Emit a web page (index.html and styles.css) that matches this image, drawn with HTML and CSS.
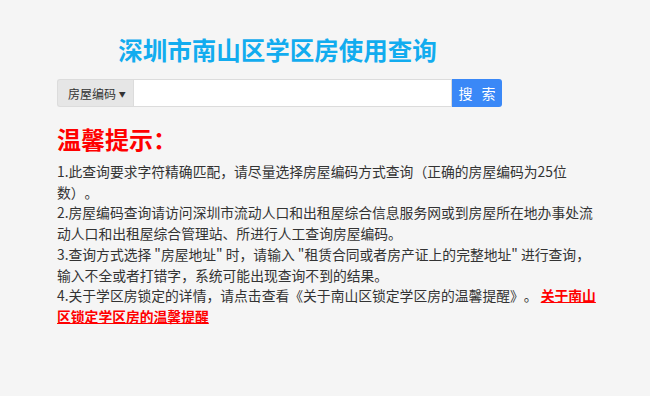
FILE: index.html
```html
<!DOCTYPE html>
<html lang="zh-CN">
<head>
  <meta charset="UTF-8" />
  <meta name="viewport" content="width=device-width, initial-scale=1" />
  <title>深圳市南山区学区房使用查询</title>
  <link rel="stylesheet" href="styles.css">
</head>
<body>
  <div class="wrap">
    <div class="search-box">
      <h1>深圳市南山区学区房使用查询</h1>
      <form class="input-group" id="searchForm">
        <button type="button" class="drop-btn">房屋编码 <span class="caret">▼</span></button>
        <input type="text" class="search-input" name="keyword" />
        <button type="submit" class="search-btn">搜 索</button>
      </form>
    </div>

    <div class="tips">
      <h2>温馨提示：</h2>
      <p>1.此查询要求字符精确匹配，请尽量选择房屋编码方式查询（正确的房屋编码为25位数）。</p>
      <p>2.房屋编码查询请访问深圳市流动人口和出租屋综合信息服务网或到房屋所在地办事处流动人口和出租屋综合管理站、所进行人工查询房屋编码。</p>
      <p>3.查询方式选择 "房屋地址" 时，请输入 "租赁合同或者房产证上的完整地址" 进行查询，输入不全或者打错字，系统可能出现查询不到的结果。</p>
      <p>4.关于学区房锁定的详情，请点击查看《关于南山区锁定学区房的温馨提醒》。 <a href="#" class="notice-link">关于南山区锁定学区房的温馨提醒</a></p>
    </div>
  </div>
</body>
</html>
```

FILE: styles.css
```css
body {
  margin: 0;
  background: #f5f5f5;
  color: #333;
  font-family: "Noto Sans CJK SC", "Liberation Sans", sans-serif;
}
.wrap {
  padding: 0 57px;
}
.search-box {
  width: 445px;
}
h1 {
  margin: 0;
  padding-top: 33px;
  padding-right: 4px;
  text-align: center;
  font-size: 24.5px;
  line-height: 34px;
  font-weight: 700;
  color: #12acef;
}
.input-group {
  display: flex;
  height: 28px;
  margin-top: 12px;
}
.drop-btn {
  width: 76px;
  margin: 0;
  padding: 0 0 0 10px;
  background: #e6e6e6;
  border: 1px solid #dcdcdc;
  border-right: none;
  border-radius: 3px 0 0 3px;
  font-family: inherit;
  font-size: 12px;
  color: #333;
  text-align: left;
}
.caret {
  font-size: 7px;
  vertical-align: 2px;
}
.search-input {
  flex: 1;
  margin: 0;
  padding: 0 8px;
  border: 1px solid #dcdcdc;
  background: #fff;
  outline: none;
}
.search-btn {
  width: 50px;
  margin: 0;
  padding: 0 0 0 3px;
  background: #3a88f7;
  border: none;
  border-radius: 0 3px 3px 0;
  color: #fff;
  font-family: inherit;
  font-size: 14px;
  letter-spacing: 3px;
}
.tips {
  width: 541px;
  text-spacing-trim: space-all;
}
h2 {
  margin: 17px 0 0;
  font-size: 24px;
  line-height: 30px;
  font-weight: 700;
  color: #f00;
}
.tips h2 + p {
  margin-top: 7px;
}
p {
  margin: 0;
  font-size: 13.8px;
  line-height: 20.7px;
}
.notice-link {
  color: #f00;
  font-weight: 700;
  text-decoration: underline;
}
```
